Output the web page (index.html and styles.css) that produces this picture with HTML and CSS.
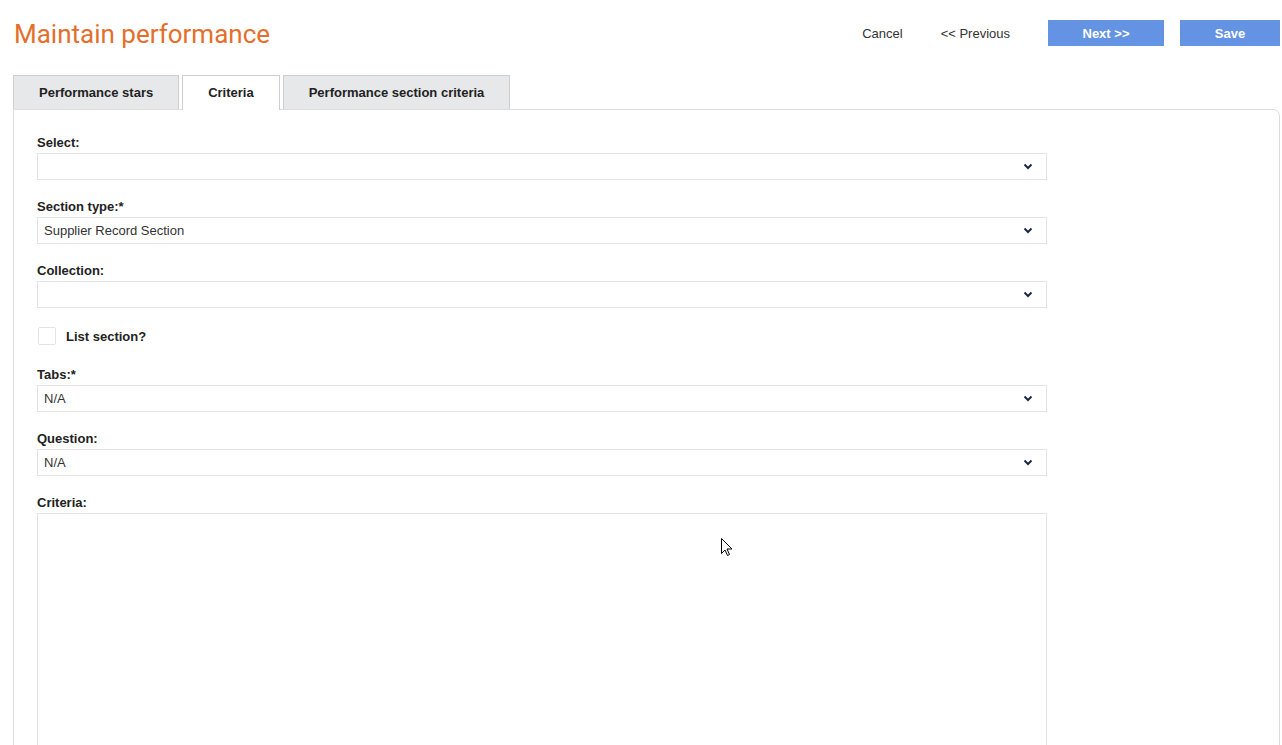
FILE: index.html
```html
<!DOCTYPE html>
<html lang="en">
<head>
  <meta charset="UTF-8">
  <meta name="viewport" content="width=device-width, initial-scale=1.0">
  <title>Maintain performance</title>
  <link rel="stylesheet" href="styles.css">
</head>
<body>
  <div class="page">
    <header>
      <h1>Maintain performance</h1>
      <div class="actions">
        <a class="link" href="#">Cancel</a>
        <a class="link" href="#">&lt;&lt; Previous</a>
        <button class="btn btn-next">Next &gt;&gt;</button>
        <button class="btn btn-save">Save</button>
      </div>
    </header>

    <div class="tabs">
      <div class="tab">Performance stars</div>
      <div class="tab active">Criteria</div>
      <div class="tab">Performance section criteria</div>
    </div>

    <div class="panel">
      <div class="field">
        <label>Select:</label>
        <div class="select"><span></span>
          <svg class="chev" viewBox="0 0 10 7" width="10" height="7"><path d="M1.5 1.5 L5 5 L8.5 1.5" fill="none" stroke="#1e2a44" stroke-width="2"/></svg>
        </div>
      </div>
      <div class="field">
        <label>Section type:*</label>
        <div class="select"><span>Supplier Record Section</span>
          <svg class="chev" viewBox="0 0 10 7" width="10" height="7"><path d="M1.5 1.5 L5 5 L8.5 1.5" fill="none" stroke="#1e2a44" stroke-width="2"/></svg>
        </div>
      </div>
      <div class="field">
        <label>Collection:</label>
        <div class="select"><span></span>
          <svg class="chev" viewBox="0 0 10 7" width="10" height="7"><path d="M1.5 1.5 L5 5 L8.5 1.5" fill="none" stroke="#1e2a44" stroke-width="2"/></svg>
        </div>
      </div>
      <div class="check-row">
        <span class="checkbox"></span>
        <span class="check-label">List section?</span>
      </div>
      <div class="field">
        <label>Tabs:*</label>
        <div class="select"><span>N/A</span>
          <svg class="chev" viewBox="0 0 10 7" width="10" height="7"><path d="M1.5 1.5 L5 5 L8.5 1.5" fill="none" stroke="#1e2a44" stroke-width="2"/></svg>
        </div>
      </div>
      <div class="field">
        <label>Question:</label>
        <div class="select"><span>N/A</span>
          <svg class="chev" viewBox="0 0 10 7" width="10" height="7"><path d="M1.5 1.5 L5 5 L8.5 1.5" fill="none" stroke="#1e2a44" stroke-width="2"/></svg>
        </div>
      </div>
      <div class="field">
        <label>Criteria:</label>
        <div class="textarea"></div>
      </div>
    </div>
  </div>

  <svg class="cursor" viewBox="0 0 12 19" width="12" height="19">
    <path d="M0.5 0.5 L0.5 15.5 L4 12 L6.5 17.5 L8.5 16.5 L6 11 L11 11 Z" fill="#fff" stroke="#000" stroke-width="1"/>
  </svg>
</body>
</html>
```

FILE: styles.css
```css
body {
  margin: 0;
  padding: 0;
  background-color: #fff;
  font-family: 'Liberation Sans', Arial, sans-serif;
  font-size: 13px;
  color: #222;
  overflow: hidden;
}
.page {
  padding: 0 2px 0 13px;
}
header {
  display: flex;
  align-items: center;
  justify-content: space-between;
  height: 26px;
  padding-top: 20px;
}
header h1 {
  margin: 0;
  padding: 2px 0 0 1px;
  font-family: Roboto, 'Liberation Sans', sans-serif;
  font-weight: 400;
  font-size: 26px;
  color: #e36f2c;
  line-height: 26px;
}
.actions {
  display: flex;
  align-items: center;
}
.link {
  color: #333;
  text-decoration: none;
  font-size: 13px;
  margin-right: 38px;
}
.btn {
  height: 26px;
  border: none;
  background-color: #6593e3;
  color: #fff;
  font-family: 'Liberation Sans', Arial, sans-serif;
  font-size: 13px;
  font-weight: bold;
  cursor: pointer;
}
.btn-next {
  width: 116px;
  margin-right: 16px;
}
.btn-save {
  width: 100px;
}
.tabs {
  display: flex;
  gap: 3px;
  margin-top: 29px;
  position: relative;
  z-index: 1;
}
.tab {
  height: 33px;
  line-height: 33px;
  padding: 0 25px;
  background-color: #e7e8ea;
  border: 1px solid #cfcfcf;
  border-bottom: none;
  font-weight: bold;
  color: #222;
}
.tab.active {
  background-color: #fff;
  height: 34px;
  margin-bottom: -1px;
}
.panel {
  border: 1px solid #dcdcdc;
  border-top-right-radius: 7px;
  padding: 25px 23px 0 23px;
  height: 700px;
}
.field {
  width: 1010px;
  margin-bottom: 19px;
}
.field label {
  display: block;
  font-weight: bold;
  line-height: 15px;
  margin-bottom: 3px;
}
.select {
  display: flex;
  align-items: center;
  justify-content: space-between;
  height: 25px;
  border: 1px solid #e4e4e4;
  padding: 0 13px 0 6px;
  color: #333;
}
.chev {
  display: block;
}
.check-row {
  display: flex;
  align-items: center;
  height: 18px;
  margin: 0 0 22px 1px;
}
.checkbox {
  width: 16px;
  height: 16px;
  border: 1px solid #e0e3e8;
  border-radius: 2px;
  margin-right: 10px;
}
.check-label {
  font-weight: bold;
}
.textarea {
  height: 260px;
  border: 1px solid #e4e4e4;
}
.cursor {
  position: absolute;
  left: 721px;
  top: 538px;
}
```
